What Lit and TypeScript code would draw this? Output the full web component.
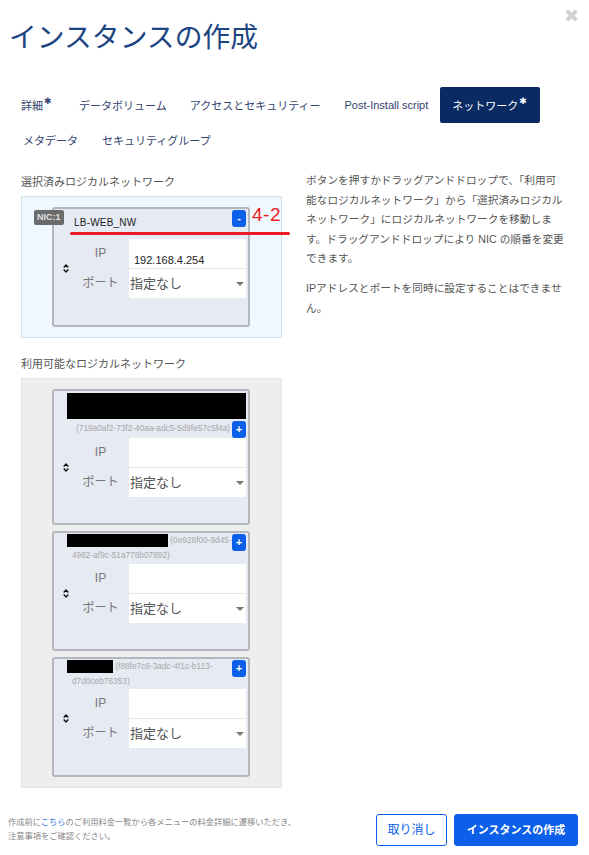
import { LitElement, html, css } from "lit";
import { customElement } from "lit/decorators.js";

type Net = {
  blackWidth: number;
  id: string;
  block?: boolean;
  headClass: string;
};

const available: Net[] = [
  { blackWidth: 179, id: "(719a0af2-73f2-40aa-adc5-5d9fe57c5f4a)", block: true, headClass: "tall" },
  { blackWidth: 101, id: "(0e928f00-9d45-4962-af9c-51a778b07892)", headClass: "mid" },
  { blackWidth: 46, id: "(f88fe7c6-3adc-4f1c-b113-d7d0ceb76353)", headClass: "" },
];

const sortIcon = html`<svg width="6" height="9" viewBox="0 0 6 9" fill="none" stroke="#111" stroke-width="1.4">
  <path d="M.7 3.4 3 1l2.3 2.4" />
  <path d="M.7 5.6 3 8l2.3-2.4" />
</svg>`;

@customElement("app-root")
export class AppRoot extends LitElement {
  static styles = css`
    :host {
      display: block;
      position: relative;
      width: 589px;
      height: 855px;
      overflow: hidden;
      background: #fff;
      font-family: "Liberation Sans", "Noto Sans CJK JP", sans-serif;
      color: #555;
    }

    .close {
      position: absolute;
      top: 7px;
      right: 10px;
      font: bold 18px/18px "DejaVu Sans", sans-serif;
      color: #d2d2d2;
    }

    h1 {
      margin: 0;
      padding: 20px 0 0 9px;
      font-size: 27.8px;
      line-height: 36px;
      font-weight: 400;
      color: #1c4483;
    }

    .tabs {
      display: flex;
      flex-wrap: wrap;
      margin: 31px 40px 0 9.5px;
    }

    .tab {
      display: flex;
      align-items: center;
      height: 36px;
      padding: 0 11.5px;
      box-sizing: border-box;
      font-size: 11px;
      color: #33426f;
      white-space: nowrap;
    }

    .tab.access {
      margin-right: 1px;
    }

    .tab.post {
      margin-right: 0.5px;
    }

    .tab.active {
      background: #0a2a63;
      color: #fff;
      border-radius: 2px;
      padding: 0 12px 0 12px;
    }

    .tab.meta {
      height: 34px;
      margin-left: 2px;
      margin-right: 1px;
    }

    .tab.group {
      height: 34px;
    }

    .tab sup {
      font: 9px/9px "DejaVu Sans", sans-serif;
      margin: -7px 4.5px 0 1px;
    }

    .tab.active sup {
      margin-right: 1px;
    }

    .columns {
      display: flex;
      margin: 16px 0 0 21px;
    }

    .left {
      width: 261px;
      flex: none;
    }

    .label {
      font-size: 11px;
      line-height: 18px;
      margin-bottom: 5px;
    }

    .label.second {
      margin-top: 17px;
    }

    .box {
      display: flex;
      flex-direction: column;
      gap: 6px;
      box-sizing: border-box;
      padding: 10px 0 10px 30px;
      border: 1px solid #e4e4e4;
      background: #eee;
    }

    .box.selected {
      position: relative;
      background: #eef8fe;
      border-color: #cfe3ea;
    }

    .badge {
      position: absolute;
      left: 12px;
      top: 13px;
      padding: 0 3px;
      height: 15px;
      border-radius: 2px;
      background: #6b6b6b;
      color: #e0e0e0;
      font-size: 9px;
      font-weight: 700;
      line-height: 15px;
    }

    .redline {
      position: absolute;
      left: 48px;
      top: 35px;
      width: 220px;
      height: 3px;
      border-radius: 2px;
      background: #ed1c24;
    }

    .redtext {
      position: absolute;
      left: 230px;
      top: 8px;
      font-size: 19px;
      letter-spacing: 0.5px;
      line-height: 20px;
      white-space: nowrap;
      color: #ed1c24;
    }

    .card {
      width: 198px;
      box-sizing: border-box;
      padding: 0 2px 27px 0;
      border: 2px solid #b4b7bd;
      border-radius: 3px;
      background: #e6eaf3;
    }

    .card.tight {
      padding-bottom: 26px;
    }

    .head {
      display: flex;
      justify-content: space-between;
      padding-left: 18px;
      min-height: 30px;
    }

    .head.mid {
      min-height: 31px;
    }

    .head.tall {
      min-height: 47px;
    }

    .name {
      width: 160px;
      font-size: 8.3px;
      line-height: 15px;
      color: #a8a8a8;
    }

    .name.wide {
      padding-top: 2px;
    }

    .black {
      display: inline-block;
      height: 13px;
      margin-left: -5px;
      background: #000;
      vertical-align: top;
      margin-top: 1px;
    }

    .black.big {
      display: block;
      height: 26px;
      margin-top: 0;
    }

    .id-under {
      display: block;
      margin: 2px 0 0 4px;
      white-space: nowrap;
    }

    .net-name {
      margin-left: 2px;
      font-size: 10px;
      line-height: 28px;
      color: #222;
      letter-spacing: 0.2px;
    }

    .btn {
      flex: none;
      width: 14px;
      height: 17px;
      margin-top: 1px;
      border-radius: 3px;
      background: #0b5fe8;
      color: #fff;
      font-size: 11px;
      font-weight: 700;
      line-height: 16px;
      text-align: center;
    }

    .head.tall .btn {
      margin-top: 30px;
    }

    .fields {
      display: grid;
      grid-template-columns: 24px 51px 1fr;
    }

    .sort {
      grid-column: 1;
      grid-row: 1 / span 2;
      display: flex;
      align-items: center;
      justify-content: center;
    }

    .field-label {
      grid-column: 2;
      padding-right: 6px;
      text-align: center;
      font-size: 12px;
      line-height: 29px;
      color: #777;
    }

    input {
      grid-column: 3;
      width: 100%;
      height: 30px;
      box-sizing: border-box;
      border: 0;
      border-bottom: 1px solid #e6e6e6;
      padding: 13px 0 0 5px;
      margin: 0;
      background: #fff;
      font: 11px "Liberation Sans", sans-serif;
      color: #222;
      outline: none;
      display: block;
    }

    .select {
      grid-column: 3;
      position: relative;
      height: 29px;
      background: #fff;
    }

    .select select {
      appearance: none;
      width: 100%;
      height: 100%;
      border: 0;
      padding: 0 0 0 1px;
      background: transparent;
      font: 13px "Liberation Sans", "Noto Sans CJK JP", sans-serif;
      color: #555;
      outline: none;
    }

    .select::after {
      content: "";
      position: absolute;
      right: 2px;
      top: 13px;
      border: 4px solid transparent;
      border-top-color: #777;
      border-bottom: 0;
    }

    .help {
      width: 258px;
      margin: -2px 0 0 24px;
      font-size: 10.7px;
      line-height: 19.5px;
    }

    .help p {
      margin: 0 0 10.5px;
    }

    .footer {
      display: flex;
      justify-content: space-between;
      align-items: center;
      margin: 26px 11px 0 8px;
    }

    .note {
      font-size: 8.26px;
      line-height: 14px;
      color: #888;
    }

    .note a {
      color: #3b78e7;
      text-decoration: none;
    }

    .actions {
      display: flex;
      gap: 7px;
    }

    .action {
      height: 32px;
      box-sizing: border-box;
      border: 1px solid #0b5fe8;
      border-radius: 3px;
      font-size: 11px;
      line-height: 30px;
      text-align: center;
      font-weight: 700;
    }

    .cancel {
      width: 71px;
      background: #fff;
      color: #0b5fe8;
      font-size: 12px;
      font-weight: 400;
    }

    .create {
      width: 124px;
      background: #0b5fe8;
      color: #fff;
    }
  `;

  private fields(ip = "") {
    return html`<div class="fields">
      <div class="sort">${sortIcon}</div>
      <div class="field-label">IP</div>
      <input .value=${ip} />
      <div class="field-label">ポート</div>
      <div class="select">
        <select><option>指定なし</option></select>
      </div>
    </div>`;
  }

  private availableCard(net: Net) {
    return html`<div class="card ${net.headClass ? "tight" : ""}">
      <div class="head ${net.headClass}">
        <div class="name ${net.block ? "wide" : ""}">
          <span class="black ${net.block ? "big" : ""}" style="width:${net.blackWidth}px"></span>
          ${net.block ? html`<span class="id-under">${net.id}</span>` : net.id}
        </div>
        <div class="btn">+</div>
      </div>
      ${this.fields()}
    </div>`;
  }

  render() {
    return html`
      <div class="close">✖</div>
      <h1>インスタンスの作成</h1>
      <div class="tabs">
        <div class="tab">詳細<sup>✱</sup></div>
        <div class="tab">データボリューム</div>
        <div class="tab access">アクセスとセキュリティー</div>
        <div class="tab post">Post-Install script</div>
        <div class="tab active">ネットワーク<sup>✱</sup></div>
        <div class="tab meta">メタデータ</div>
        <div class="tab group">セキュリティグループ</div>
      </div>
      <div class="columns">
        <div class="left">
          <div class="label">選択済みロジカルネットワーク</div>
          <div class="box selected">
            <div class="card">
              <div class="head">
                <div class="name"><span class="net-name">LB-WEB_NW</span></div>
                <div class="btn">-</div>
              </div>
              ${this.fields("192.168.4.254")}
            </div>
            <div class="badge">NIC:1</div>
            <div class="redline"></div>
            <div class="redtext">4-2</div>
          </div>
          <div class="label second">利用可能なロジカルネットワーク</div>
          <div class="box">${available.map((n) => this.availableCard(n))}</div>
        </div>
        <div class="help">
          <p>ボタンを押すかドラッグアンドドロップで、「利用可能なロジカルネットワーク」から「選択済みロジカルネットワーク」にロジカルネットワークを移動します。ドラッグアンドドロップにより NIC の順番を変更できます。</p>
          <p>IPアドレスとポートを同時に設定することはできません。</p>
        </div>
      </div>
      <div class="footer">
        <div class="note">作成前に<a href="#">こちら</a>のご利用料金一覧から各メニューの料金詳細に遷移いただき、<br />注意事項をご確認ください。</div>
        <div class="actions">
          <div class="action cancel">取り消し</div>
          <div class="action create">インスタンスの作成</div>
        </div>
      </div>
    `;
  }
}
